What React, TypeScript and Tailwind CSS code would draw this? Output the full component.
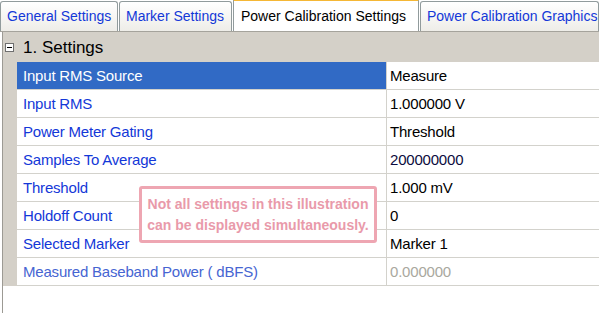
import React from "react";

type Row = { label: string; value: string; selected?: boolean; disabled?: boolean; valueClass?: string };

const rows: Row[] = [
  { label: "Input RMS Source", value: "Measure", selected: true },
  { label: "Input RMS", value: "1.000000 V" },
  { label: "Power Meter Gating", value: "Threshold" },
  { label: "Samples To Average", value: "200000000", valueClass: "text-[#0c0c40]" },
  { label: "Threshold", value: "1.000 mV" },
  { label: "Holdoff Count", value: "0" },
  { label: "Selected Marker", value: "Marker 1" },
  { label: "Measured Baseband Power ( dBFS)", value: "0.000000", disabled: true },
];

function Tab({ label, width, active }: { label: string; width: string; active?: boolean }) {
  if (active) {
    return (
      <div
        className={`${width} h-[32px] shrink-0 whitespace-nowrap border-t-[2px] border-x border-t-[#f5b735] border-x-[#919b9c] bg-white pl-[7px] pt-[5px] text-[14px] text-black`}
      >
        {label}
      </div>
    );
  }
  return (
    <div
      className={`${width} mt-[1px] h-[30px] shrink-0 whitespace-nowrap rounded-t-[3px] border border-b-0 border-[#919b9c] bg-gradient-to-b from-white to-[#eeede8] pl-[6px] pt-[4px] text-[14px] text-[#1338d8]`}
    >
      {label}
    </div>
  );
}

export default function App() {
  return (
    <div className="relative h-[313px] w-[599px] overflow-hidden bg-white font-['Liberation_Sans',Arial,sans-serif]">
      {/* tab strip */}
      <div className="flex h-[32px] items-end gap-[1px] border-b border-[#a5a39c]">
        <Tab label="General Settings" width="w-[118px]" />
        <Tab label="Marker Settings" width="w-[113px]" />
        <Tab label="Power Calibration Settings" width="w-[186px]" active />
        <Tab label="Power Calibration Graphics" width="w-[179px]" />
      </div>

      {/* property grid */}
      <div className="ml-[2px] h-[281px] border-l border-[#9c9a94]">
        <div className="flex h-[30px] items-center bg-[#d4d0c8]">
          <div className="ml-[2px] flex h-[9px] w-[9px] items-center justify-center border border-[#6f6f6f] bg-white">
            <div className="h-[1px] w-[5px] bg-black" />
          </div>
          <span className="ml-[9px] mt-[2px] text-[17px] text-black">1. Settings</span>
        </div>

        {rows.map((r) => (
          <div key={r.label} className="flex h-[28px]">
            <div className="w-[14px] shrink-0 bg-[#d4d0c8]" />
            <div
              className={`flex w-[370px] shrink-0 items-center border-b border-r border-[#d3d2cc] pl-[6px] pt-[2px] text-[15px] tracking-[-0.2px] ${
                r.selected ? "bg-[#316ac5] text-white" : r.disabled ? "text-[#4665d2]" : "text-[#1338d8]"
              }`}
            >
              {r.label}
            </div>
            <div
              className={`flex flex-1 items-center border-b border-[#d3d2cc] pl-[3px] pt-[2px] text-[15px] tracking-[-0.2px] ${
                r.disabled ? "text-[#a9a89e]" : r.valueClass ?? "text-black"
              }`}
            >
              {r.value}
            </div>
          </div>
        ))}
      </div>

      {/* illustration note */}
      <div className="absolute left-[139px] top-[186px] flex h-[57px] w-[238px] flex-col items-center justify-center rounded-[3px] border-[3px] border-[#eea6b2] bg-white text-[14px] font-bold leading-[21px] text-[#e99aaa]">
        <span>Not all settings in this illustration</span>
        <span>can be displayed simultaneously.</span>
      </div>
    </div>
  );
}
